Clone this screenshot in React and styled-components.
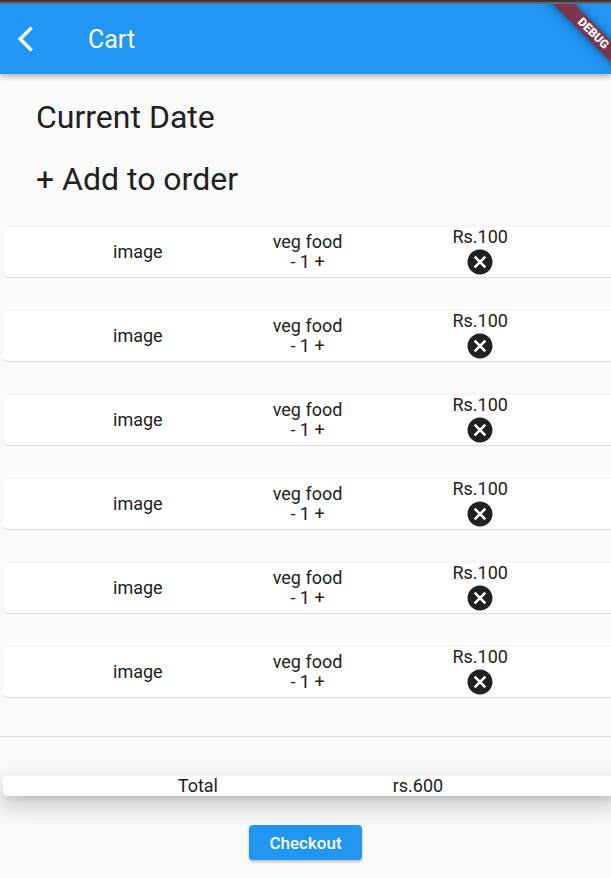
import React from "react";
import styled, { createGlobalStyle } from "styled-components";

const GlobalStyle = createGlobalStyle`
  * { box-sizing: border-box; }
  body {
    margin: 0;
    background: #fafafa;
    color: #212121;
    font-family: Roboto, "Liberation Sans", sans-serif;
    font-size: 18px;
    line-height: 20px;
  }
`;

const Page = styled.div`
  min-height: 100vh;
  overflow: hidden;
`;

const AppBar = styled.header`
  position: relative;
  display: flex;
  align-items: center;
  gap: 40px;
  height: 74px;
  padding: 4px 18px 0;
  overflow: hidden;
  color: #fff;
  background: linear-gradient(#38383d 0 2px, #66666a 2px 4px, #2196f3 4px);
`;

const BarShadow = styled.div`
  box-shadow: 0 2px 5px rgba(0, 0, 0, 0.2), 0 4px 6px rgba(0, 0, 0, 0.1);
`;

const IconButton = styled.button`
  display: flex;
  padding: 0;
  border: 0;
  color: inherit;
  background: none;
  cursor: pointer;
`;

const Icon = styled.svg`
  display: block;
  width: 30px;
  height: 30px;
  fill: currentColor;
`;

const Title = styled.h1`
  margin: 0;
  padding-top: 2px;
  font-size: 25px;
  line-height: 30px;
  font-weight: 400;
`;

const RibbonArea = styled.div`
  position: absolute;
  top: 4px;
  right: 0;
  bottom: 0;
  width: 100px;
  overflow: hidden;
`;

const Ribbon = styled.div`
  position: absolute;
  top: 22px;
  right: -67px;
  width: 170px;
  height: 15px;
  transform: rotate(45deg);
  background: #7e344a;
  box-shadow: 0 0 8px rgba(0, 0, 0, 0.5);
  font-size: 12px;
  line-height: 15px;
  font-weight: 900;
  text-align: center;
`;

const Headings = styled.div`
  display: grid;
  gap: 22px;
  padding: 23px 36px 28px;
`;

const Heading = styled.h2`
  margin: 0;
  font-size: 32px;
  line-height: 40px;
  font-weight: 400;
`;

const List = styled.ul`
  display: grid;
  gap: 34px;
  margin: 0;
  padding: 0 0 39px;
  list-style: none;
`;

const Card = styled.li`
  display: flex;
  align-items: center;
  justify-content: space-evenly;
  margin: 0 -7px 0 3px;
  border-radius: 5px;
  background: #fff;
  box-shadow: 0 1px 1px rgba(0, 0, 0, 0.12), 0 0 2px rgba(0, 0, 0, 0.08);
`;

const Column = styled.div`
  display: flex;
  flex-direction: column;
  align-items: center;
`;

const Totals = styled.section`
  padding: 39px 0 29px;
  border-top: 1px solid #dcdcdc;
`;

const TotalCard = styled(Card).attrs({ as: "div" })`
  box-shadow: 0 6px 6px -3px rgba(0, 0, 0, 0.1),
    0 12px 22px 1px rgba(0, 0, 0, 0.12), 0 5px 22px 4px rgba(0, 0, 0, 0.08);
`;

const Actions = styled.div`
  display: flex;
  justify-content: center;
  padding-bottom: 18px;
`;

const Checkout = styled.button`
  position: relative;
  height: 35px;
  padding: 0 20px;
  border: 0;
  border-radius: 4px;
  color: #fff;
  background: #2196f3;
  box-shadow: 0 2px 3px rgba(0, 0, 0, 0.24);
  font: 500 17px/20px Roboto, "Liberation Sans", sans-serif;
  cursor: pointer;
`;

const items = Array.from({ length: 6 }, (_, id) => ({
  id,
  name: "veg food",
  quantity: 1,
  price: 100,
}));

function CartItem({ item }) {
  return (
    <Card>
      <span>image</span>
      <Column>
        <span>{item.name}</span>
        <span>{`- ${item.quantity} +`}</span>
      </Column>
      <Column>
        <span>{`Rs.${item.price}`}</span>
        <IconButton type="button" aria-label="Remove item">
          <Icon viewBox="0 0 24 24" aria-hidden="true">
            <path d="M12 2C6.47 2 2 6.47 2 12s4.47 10 10 10 10-4.47 10-10S17.53 2 12 2zm5 13.59L15.59 17 12 13.41 8.41 17 7 15.59 10.59 12 7 8.41 8.41 7 12 10.59 15.59 7 17 8.41 13.41 12 17 15.59z" />
          </Icon>
        </IconButton>
      </Column>
    </Card>
  );
}

export default function App() {
  return (
    <Page>
      <GlobalStyle />
      <BarShadow>
        <AppBar>
          <IconButton type="button" aria-label="Back">
            <Icon viewBox="0 0 24 24" aria-hidden="true">
              <path
                d="M11.67 3.87L9.9 2.1 0 12l9.9 9.9 1.77-1.77L3.54 12z"
                stroke="currentColor"
                strokeWidth="0.4"
              />
            </Icon>
          </IconButton>
          <Title>Cart</Title>
          <RibbonArea>
            <Ribbon>DEBUG</Ribbon>
          </RibbonArea>
        </AppBar>
      </BarShadow>
      <main>
        <Headings>
          <Heading>Current Date</Heading>
          <Heading>+ Add to order</Heading>
        </Headings>
        <List>
          {items.map((item) => (
            <CartItem key={item.id} item={item} />
          ))}
        </List>
        <Totals>
          <TotalCard>
            <span>Total</span>
            <span>rs.600</span>
          </TotalCard>
        </Totals>
        <Actions>
          <Checkout type="button">Checkout</Checkout>
        </Actions>
      </main>
    </Page>
  );
}
